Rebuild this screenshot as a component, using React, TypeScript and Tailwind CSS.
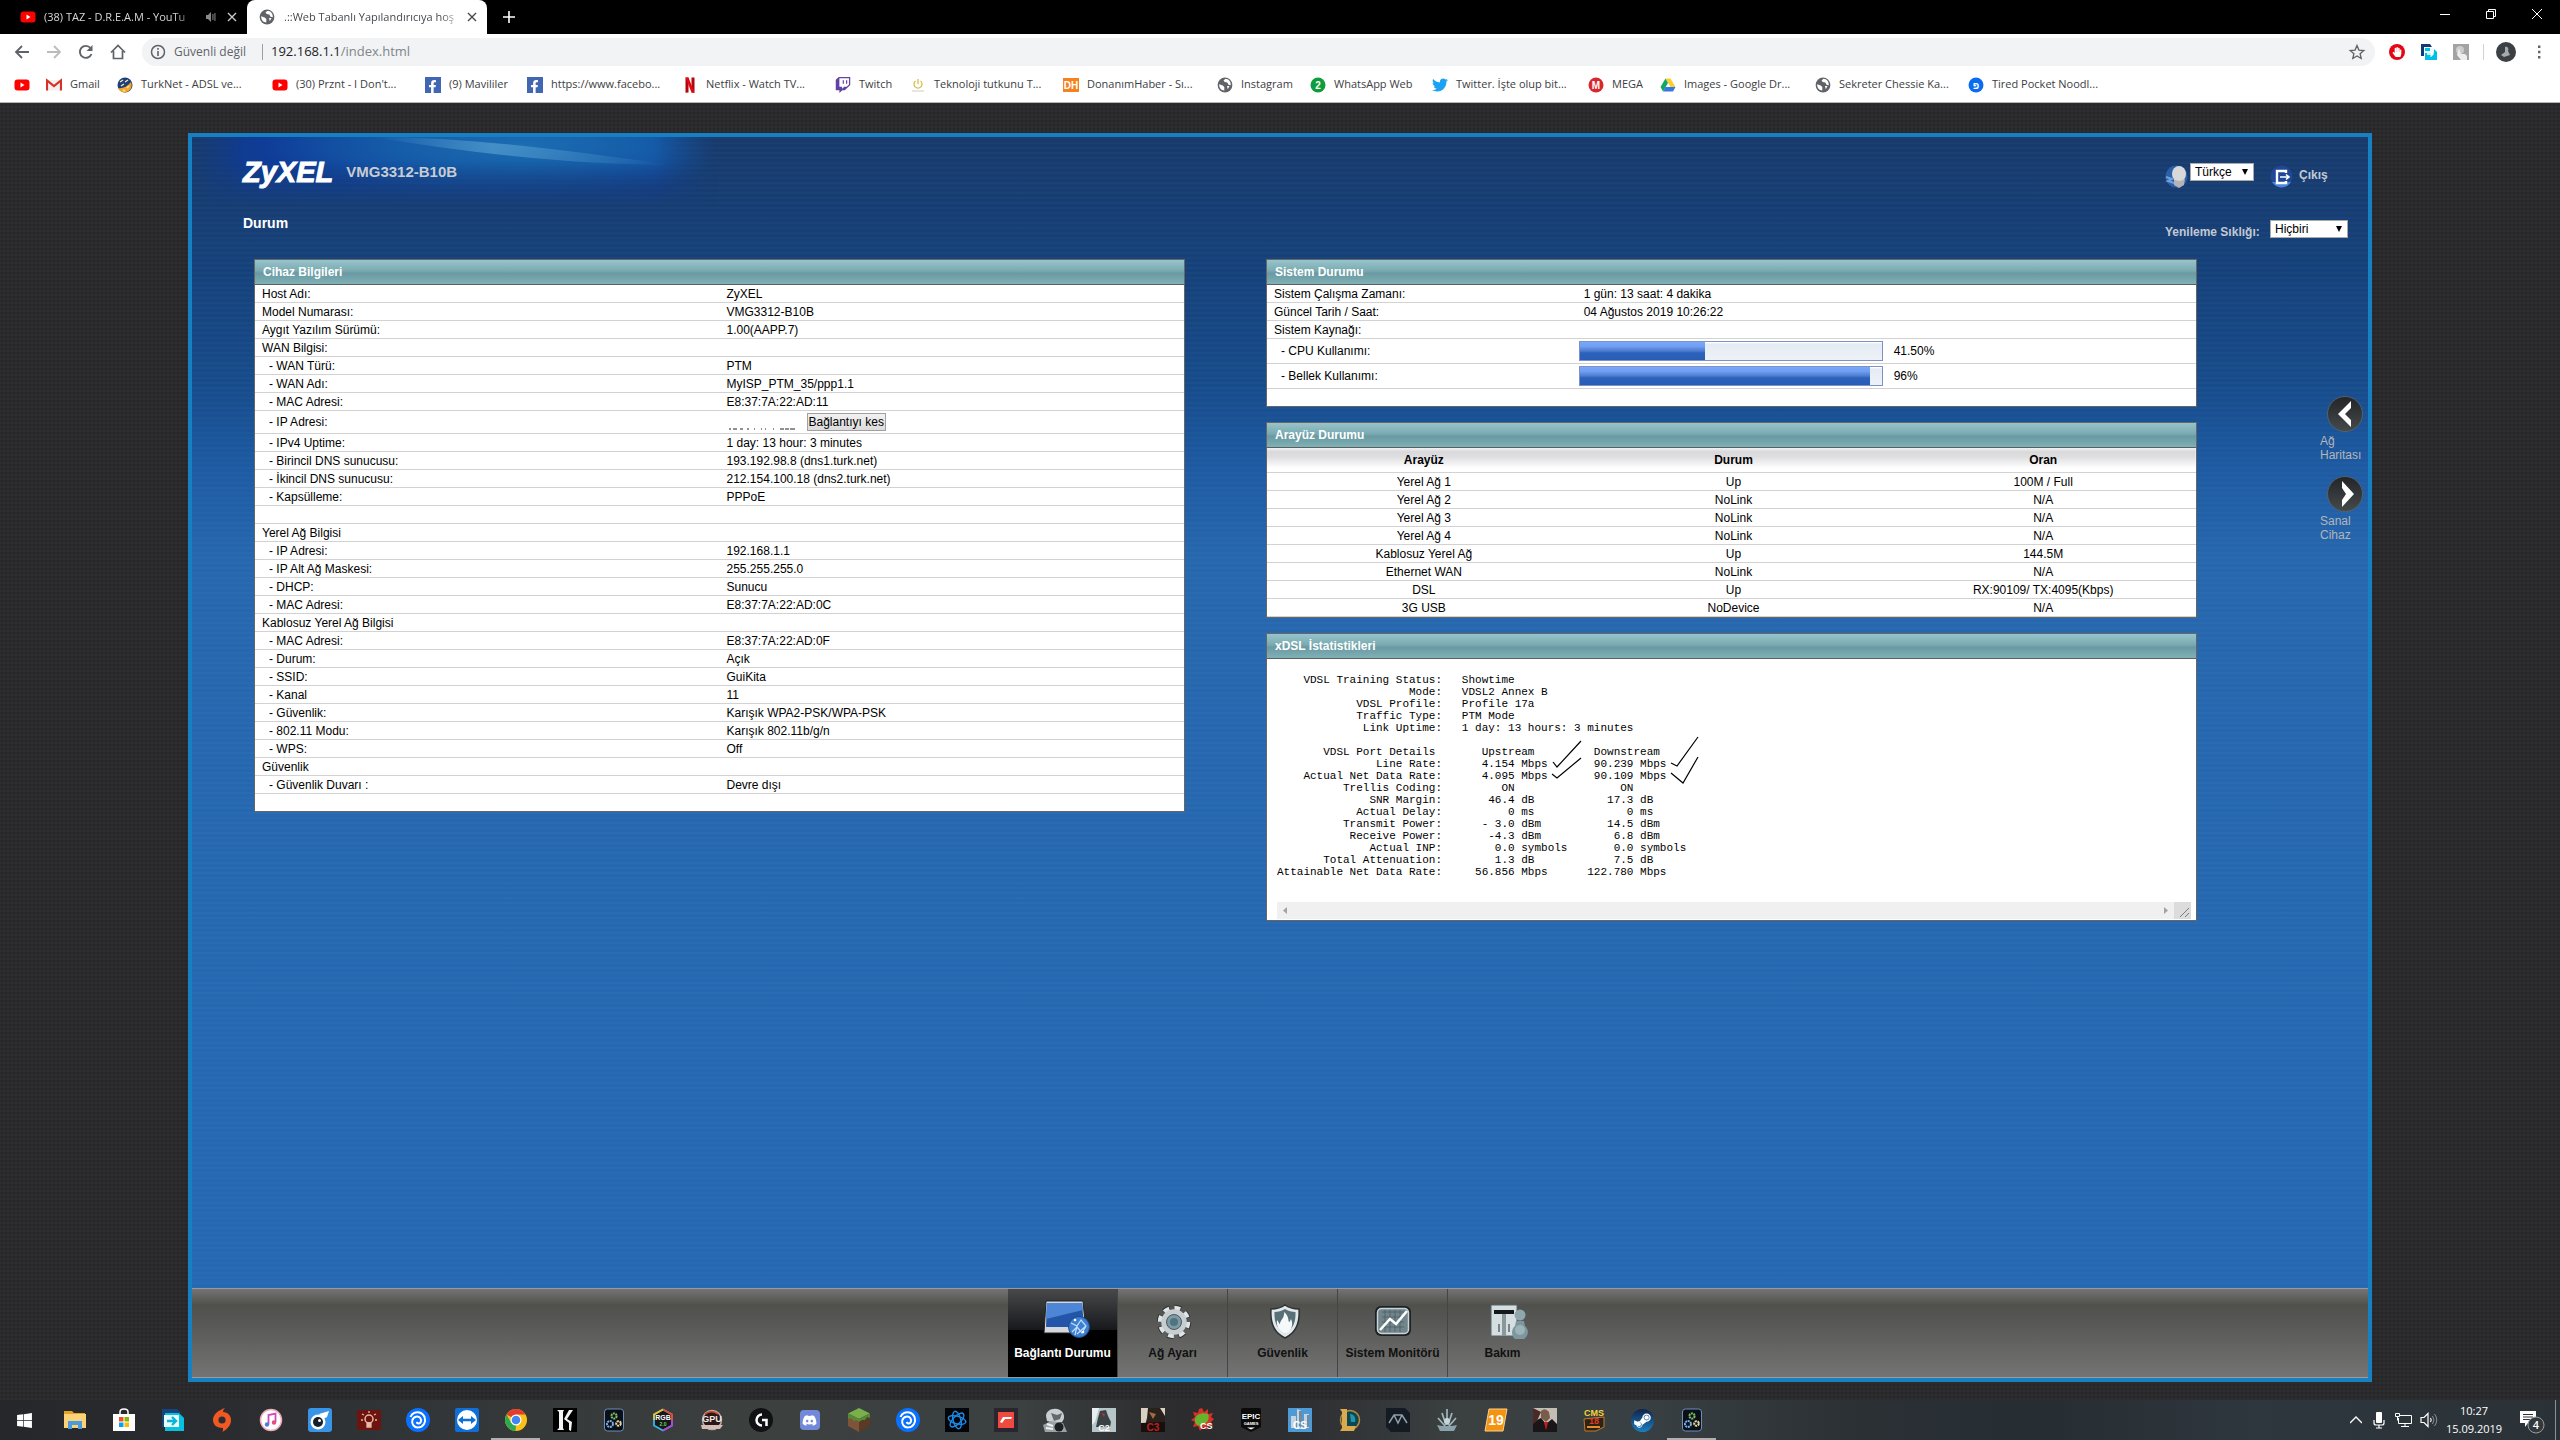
import type { ReactNode } from "react";
import {
  FaDiscord,
  FaFacebookF,
  FaHandPaper,
  FaSteamSymbol,
  FaTwitch,
  FaTwitter,
  FaWindows,
} from "react-icons/fa";

type Bookmark = { label: string; icon: ReactNode; width: string };
type InfoRow = { label: string; value?: string; sub?: boolean };

function YoutubeIcon() {
  return (
    <svg viewBox="0 0 16 16" className="size-4 shrink-0">
      <rect x="0.5" y="2.5" width="15" height="11" rx="3" fill="#f00" />
      <path d="M6.5 5.5v5l4-2.5z" fill="#fff" />
    </svg>
  );
}

function GlobeIcon() {
  return (
    <svg viewBox="0 0 16 16" className="size-4 shrink-0">
      <circle cx="8" cy="8" r="7.4" fill="#5f6368" />
      <path
        d="M2.2 7.2l3.5 1.3 1.6 1.5v3.4c-3 0-5.4-2.6-5.1-6.2zM8.5 1.8l-2 1.7 1.2 1.5 2.6.4 1.2 2.4 2.3.4c.3-3.3-2-6.2-5.3-6.4z"
        fill="#fff"
      />
      <path d="M10 9h2.5l-1.7 3.2z" fill="#fff" />
    </svg>
  );
}

function FacebookIcon() {
  return (
    <span className="flex size-4 shrink-0 items-end justify-end bg-[#4267b2] pr-0.5 text-white">
      <FaFacebookF size={13} />
    </span>
  );
}

function CircleIcon({ color, text }: { color: string; text: string }) {
  return (
    <svg viewBox="0 0 16 16" className="size-4 shrink-0">
      <circle cx="8" cy="8" r="7.5" fill={color} />
      <text x="8" y="11.5" textAnchor="middle" fontFamily="Liberation Sans" fontWeight="bold" fontSize="10" fill="#fff">
        {text}
      </text>
    </svg>
  );
}

const bookmarks: Bookmark[] = [
  { label: "", width: "w-8", icon: <YoutubeIcon /> },
  {
    label: "Gmail",
    width: "w-[71px]",
    icon: (
      <svg viewBox="0 0 16 16" className="size-4 shrink-0">
        <path d="M1 3h14v10.5H1z" fill="#f1f1f1" />
        <path d="M1 13.5V3.5l7 5.5 7-5.5v10" fill="none" stroke="#d93025" strokeWidth="2.2" />
      </svg>
    ),
  },
  {
    label: "TurkNet - ADSL ve...",
    width: "w-[155px]",
    icon: (
      <svg viewBox="0 0 16 16" className="size-4 shrink-0">
        <circle cx="8" cy="8" r="7.5" fill="#1c3f7c" />
        <path d="M1 11c4 1 9-1 13-6 2 5-1 10-6 10.500-3 0-6-2-7-4.500z" fill="#f6a623" />
        <path d="M3 5l3-2M8 5l3-2M4 9l3-2M6 13l2 1M10 11l2-2" stroke="#fbe3b0" strokeWidth="1.5" />
      </svg>
    ),
  },
  { label: "(30) Prznt - I Don't...", width: "w-[153px]", icon: <YoutubeIcon /> },
  { label: "(9) Mavililer", width: "w-[102px]", icon: <FacebookIcon /> },
  { label: "https://www.facebo...", width: "w-[155px]", icon: <FacebookIcon /> },
  {
    label: "Netflix - Watch TV...",
    width: "w-[153px]",
    icon: (
      <svg viewBox="0 0 16 16" className="size-4 shrink-0">
        <path d="M3.5 0.5h3v15l-3 .3zM9.5 0.5h3v15.3l-3-.3z" fill="#b1060f" />
        <path d="M3.5 0.5h3l6 15.3-3-.4z" fill="#e50914" />
      </svg>
    ),
  },
  { label: "Twitch", width: "w-[75px]", icon: <FaTwitch size={16} className="shrink-0 text-[#6441a5]" /> },
  {
    label: "Teknoloji tutkunu T...",
    width: "w-[153px]",
    icon: (
      <svg viewBox="0 0 16 16" className="size-4 shrink-0">
        <path d="M5.5 4a4 4 0 1 0 5 0M8 2v5" fill="none" stroke="#d8c04a" strokeWidth="1.3" />
        <path d="M2 14h12" stroke="#ccc" />
      </svg>
    ),
  },
  {
    label: "DonanımHaber - Sı...",
    width: "w-[154px]",
    icon: (
      <svg viewBox="0 0 16 16" className="size-4 shrink-0">
        <path d="M0 1h16v14H0z" fill="#f58220" />
        <text x="8" y="11.5" textAnchor="middle" fontFamily="Liberation Sans" fontWeight="bold" fontSize="10" fill="#fff">
          DH
        </text>
      </svg>
    ),
  },
  { label: "Instagram", width: "w-[93px]", icon: <GlobeIcon /> },
  { label: "WhatsApp Web", width: "w-[122px]", icon: <CircleIcon color="#0f9d3c" text="2" /> },
  { label: "Twitter. İşte olup bit...", width: "w-[156px]", icon: <FaTwitter size={16} className="shrink-0 text-[#1da1f2]" /> },
  { label: "MEGA", width: "w-[72px]", icon: <CircleIcon color="#d9272e" text="M" /> },
  {
    label: "Images - Google Dr...",
    width: "w-[155px]",
    icon: (
      <svg viewBox="0 0 16 16" className="size-4 shrink-0">
        <path d="M5.5 1.5h5l5 8.5h-5z" fill="#fc3" />
        <path d="M5.5 1.5L.5 10l2.5 4.5L8 6z" fill="#11a861" />
        <path d="M3 14.5L5.5 10h10L13 14.5z" fill="#3777e3" />
      </svg>
    ),
  },
  { label: "Sekreter Chessie Ka...", width: "w-[153px]", icon: <GlobeIcon /> },
  { label: "Tired Pocket Noodl...", width: "w-[150px]", icon: <CircleIcon color="#0b6cf0" text="פ" /> },
];

function CloseIcon() {
  return (
    <svg viewBox="0 0 10 10" className="size-[10px]">
      <path d="M1 1l8 8M9 1L1 9" stroke="currentColor" strokeWidth="1.4" />
    </svg>
  );
}

function TabStrip() {
  return (
    <div className="flex h-[34px] items-center bg-black text-[11px] text-[#c8c8c8]">
      <div className="flex w-[247px] items-center pr-[10px] pl-5">
        <YoutubeIcon />
        <span className="ml-2 w-[154px] whitespace-nowrap text-[#d6d6d6] [mask-image:linear-gradient(to_right,black_85%,transparent)]">
          (38) TAZ - D.R.E.A.M - YouTu
        </span>
        <svg viewBox="0 0 12 12" className="ml-2 size-3 text-[#8a8a8a]">
          <path d="M1 4h2l3-3v10L3 8H1z" fill="currentColor" />
          <path d="M8 3v6M10 2v8" stroke="currentColor" />
        </svg>
        <button className="ml-[10px]" aria-label="Sekmeyi kapat">
          <CloseIcon />
        </button>
      </div>
      <div className="flex h-[34px] w-[240px] items-center rounded-t-lg bg-white pr-[10px] pl-3 text-[#45494d]">
        <GlobeIcon />
        <span className="ml-[9px] w-[178px] whitespace-nowrap [mask-image:linear-gradient(to_right,black_88%,transparent)]">
          .::Web Tabanlı Yapılandırıcıya hoş
        </span>
        <button className="ml-auto" aria-label="Sekmeyi kapat">
          <CloseIcon />
        </button>
      </div>
      <button className="ml-4 text-white" aria-label="Yeni sekme">
        <svg viewBox="0 0 12 12" className="size-3">
          <path d="M6 0v12M0 6h12" stroke="currentColor" strokeWidth="1.6" />
        </svg>
      </button>
      <div className="mb-[6px] ml-auto flex items-center gap-9 pr-[18px] text-white">
        <button aria-label="Küçült">
          <svg viewBox="0 0 10 10" className="size-[10px]">
            <path d="M0 5.5h10" stroke="currentColor" />
          </svg>
        </button>
        <button aria-label="Geri yükle">
          <svg viewBox="0 0 10 10" className="size-[10px]">
            <path d="M.5 2.5h7v7h-7zM2.5 2.5v-2h7v7h-2" fill="none" stroke="currentColor" />
          </svg>
        </button>
        <button aria-label="Kapat">
          <svg viewBox="0 0 10 10" className="size-[10px]">
            <path d="M0 0l10 10M10 0L0 10" stroke="currentColor" />
          </svg>
        </button>
      </div>
    </div>
  );
}

function Toolbar() {
  return (
    <div className="flex h-9 items-center bg-white text-[#5f6368]">
      <div className="flex w-[142px] items-center gap-4 pl-[14px]">
        <button aria-label="Geri">
          <svg viewBox="0 0 16 16" className="size-4">
            <path d="M15 8H2M8 2L2 8l6 6" fill="none" stroke="currentColor" strokeWidth="1.8" />
          </svg>
        </button>
        <button className="text-[#babcbe]" aria-label="İleri">
          <svg viewBox="0 0 16 16" className="size-4">
            <path d="M1 8h13M8 2l6 6-6 6" fill="none" stroke="currentColor" strokeWidth="1.8" />
          </svg>
        </button>
        <button aria-label="Yenile">
          <svg viewBox="0 0 16 16" className="size-4">
            <path d="M13.5 10A6 6 0 1 1 12.5 4" fill="none" stroke="currentColor" strokeWidth="1.9" />
            <path d="M14.5 1v6h-6z" fill="currentColor" />
          </svg>
        </button>
        <button aria-label="Ana sayfa">
          <svg viewBox="0 0 16 16" className="size-4">
            <path d="M1 8.5L8 1.5l7 7M3.5 7v7.5h9V7" fill="none" stroke="currentColor" strokeWidth="1.7" />
          </svg>
        </button>
      </div>
      <div className="flex h-7 flex-1 items-center rounded-full bg-[#f1f3f4] px-2 text-[13px]">
        <svg viewBox="0 0 16 16" className="size-4">
          <circle cx="8" cy="8" r="6.5" fill="none" stroke="currentColor" strokeWidth="1.5" />
          <path d="M8 7v5M8 4v1.7" stroke="currentColor" strokeWidth="1.6" />
        </svg>
        <span className="ml-2 w-20 text-[12px] whitespace-nowrap">Güvenli değil</span>
        <span className="mx-2 h-4 w-px bg-[#9aa0a6]" />
        <span className="text-[#202124]">192.168.1.1</span>
        <span className="flex-1 text-[#80868b]">/index.html</span>
        <button aria-label="Yer işareti ekle">
          <svg viewBox="0 0 20 20" className="size-5">
            <path
              d="M10 3.5l1.9 4.6 4.9.4-3.7 3.2 1.1 4.8-4.2-2.6-4.2 2.6 1.1-4.8-3.7-3.2 4.9-.4z"
              fill="none"
              stroke="currentColor"
              strokeWidth="1.3"
            />
          </svg>
        </button>
      </div>
      <div className="flex items-center pr-[13px] pl-[14px]">
        <button className="flex size-4 items-center justify-center rounded-full bg-[#e30613] text-white" aria-label="AdBlock">
          <FaHandPaper size={10} />
        </button>
        <button className="ml-4" aria-label="Çeviri">
          <svg viewBox="0 0 16 16" className="size-4">
            <path d="M0 0h9l2 3H3v9H0z" fill="#123a7a" />
            <path d="M4 4h8l4 4v8H4z" fill="#00c0e8" />
            <path d="M4 7h5V4h4v5H4z" fill="#e9fbff" />
            <path d="M6 10h6M9.5 7.5L12 10l-2.5 2.5" stroke="#fff" strokeWidth="1.5" fill="none" />
          </svg>
        </button>
        <button className="ml-4" aria-label="Eklenti">
          <svg viewBox="0 0 16 16" className="size-4">
            <path d="M0 0h16v16H0z" fill="#a3a3a3" />
            <circle cx="7" cy="6" r="4" fill="#ccc" />
            <path d="M6 4l2 6h4l2 2v4H8L4 11z" fill="#eee" />
          </svg>
        </button>
        <span className="mr-3 ml-[14px] h-4 w-px bg-[#d0d3d6]" />
        <button aria-label="Profil">
          <svg viewBox="0 0 20 20" className="size-5">
            <circle cx="10" cy="10" r="10" fill="#3b4045" />
            <path d="M9 5c3-1 4 2 3 4l2 4-6 2-3-2 4-3z" fill="#a7a9ab" />
          </svg>
        </button>
        <button className="ml-[15px]" aria-label="Menü">
          <svg viewBox="0 0 16 16" className="size-4">
            <path d="M7 1.500h2.400v2.400H7zM7 6.800h2.400v2.400H7zM7 12.100h2.400v2.400H7z" fill="currentColor" />
          </svg>
        </button>
      </div>
    </div>
  );
}

function BookmarkBar() {
  return (
    <nav className="flex h-[33px] items-center border-b border-[#b6b6b6] bg-white pb-[3px] pl-[14px] text-[11px] text-[#3c4043]">
      {bookmarks.map((b, i) => (
        <a key={i} href="#" aria-label={b.label || "YouTube"} className={`flex shrink-0 items-center gap-2 whitespace-nowrap ${b.width}`}>
          {b.icon}
          {b.label}
        </a>
      ))}
    </nav>
  );
}

function Dropdown({ id, value, width }: { id: string; value: string; width: string }) {
  return (
    <span className={`relative ${width}`}>
      <select
        id={id}
        aria-label={value}
        className="h-[18px] w-full appearance-none border border-[#a9a9a9] bg-white px-1 text-[12px] leading-[16px] text-black"
      >
        <option>{value}</option>
      </select>
      <svg viewBox="0 0 8 8" className="pointer-events-none absolute top-[5px] right-[5px] size-2">
        <path d="M1 1h6L4 7z" fill="#000" />
      </svg>
    </span>
  );
}

function Header() {
  return (
    <header className="relative flex h-[122px] justify-between pr-5 pl-[51px]">
      {/* glow behind the logo, faded out to the sides and the bottom */}
      <div className="absolute top-0 left-0 h-[70px] w-[525px] bg-[radial-gradient(ellipse_260px_50px_at_330px_8px,#1c6db2_0%,#155ca8_50%,transparent_100%),linear-gradient(to_right,#123b86,#0f3c98_15%,#1146a0_50%,#123f98_88%,#15407c)] [mask-composite:intersect] [mask-image:linear-gradient(to_bottom,black_35%,transparent),linear-gradient(to_right,transparent,black_10%,black_88%,transparent)]" />
      <svg viewBox="0 0 530 60" className="absolute top-0 left-0 h-[60px] w-[530px]">
        <defs>
          <linearGradient id="streak" x1="0" y1="0" x2="1" y2="0">
            <stop offset="0" stopColor="#6db4de" stopOpacity="0" />
            <stop offset="0.4" stopColor="#6db4de" stopOpacity="0.5" />
            <stop offset="1" stopColor="#6db4de" stopOpacity="0" />
          </linearGradient>
        </defs>
        <path d="M180 0c100 0 200 14 300 28-90 0-190-10-300-28z" fill="url(#streak)" />
      </svg>
      <div className="relative flex flex-col">
        <div className="flex h-[71px] items-center gap-[13px]">
          <span className="text-[29px] leading-[35px] font-bold text-white italic [-webkit-text-stroke:1px_white]">ZyXEL</span>
          <span className="text-[15px] font-bold text-[#c8ccd2]">VMG3312-B10B</span>
        </div>
        <h1 className="mt-[7px] text-[14px] leading-4 font-bold text-white">Durum</h1>
      </div>
      <div className="relative flex w-[183px] flex-col pt-[26px] text-[12px] font-bold text-[#c3c9d3]">
        <div className="flex items-start">
          <svg viewBox="0 0 23 23" className="mt-0.5 size-[23px]">
            <circle cx="11.5" cy="11.5" r="11" fill="#2b5fa8" />
            <ellipse cx="14" cy="9" rx="7" ry="8" fill="#d9d9d9" />
            <path d="M9 15l6 1 5-2-1 6-5 3-5-3z" fill="#b4b4b4" />
            <path d="M1 12l6 2-4 2 6 2" fill="none" stroke="#6fa0dc" strokeWidth="2" />
          </svg>
          <Dropdown id="language" value="Türkçe" width="ml-0.5 w-16 font-normal" />
          <svg viewBox="0 0 23 23" className="mt-0.5 ml-4 size-[23px]">
            <circle cx="11.5" cy="11.5" r="11" fill="#1f4796" />
            <path d="M2 17a11 11 0 0 0 19 0z" fill="#4d84dc" />
            <path d="M16 8V6H7v12h9v-2" fill="none" stroke="#fff" strokeWidth="2.4" />
            <path d="M10 12h9M16 9.5l3 2.5-3 2.5" fill="none" stroke="#fff" strokeWidth="1.6" />
          </svg>
          <a href="#" className="mt-1 ml-[6px] leading-[16px]">
            Çıkış
          </a>
        </div>
        <div className="mt-8 flex items-start justify-between">
          <label htmlFor="refresh" className="mt-1 leading-[16px]">
            Yenileme Sıklığı:
          </label>
          <Dropdown id="refresh" value="Hiçbiri" width="w-[78px] font-normal" />
        </div>
      </div>
    </header>
  );
}

function Panel({ title, children }: { title: string; children: ReactNode }) {
  return (
    <section className="border border-[#666] bg-white">
      <h2 className="h-[25px] border-b border-[#5a5f60] bg-[linear-gradient(#98c4cb_0%,#7aaab1_45%,#6999a2_55%,#80b1b6_100%)] pl-2 text-[12px] leading-[24px] font-bold text-white">
        {title}
      </h2>
      {children}
    </section>
  );
}

const wanRows: InfoRow[] = [
  { label: "Host Adı:", value: "ZyXEL" },
  { label: "Model Numarası:", value: "VMG3312-B10B" },
  { label: "Aygıt Yazılım Sürümü:", value: "1.00(AAPP.7)" },
  { label: "WAN Bilgisi:" },
  { label: "WAN Türü:", value: "PTM", sub: true },
  { label: "WAN Adı:", value: "MyISP_PTM_35/ppp1.1", sub: true },
  { label: "MAC Adresi:", value: "E8:37:7A:22:AD:11", sub: true },
];

const lanRows: InfoRow[] = [
  { label: "IPv4 Uptime:", value: "1 day: 13 hour: 3 minutes", sub: true },
  { label: "Birincil DNS sunucusu:", value: "193.192.98.8 (dns1.turk.net)", sub: true },
  { label: "İkincil DNS sunucusu:", value: "212.154.100.18 (dns2.turk.net)", sub: true },
  { label: "Kapsülleme:", value: "PPPoE", sub: true },
  { label: "" },
  { label: "Yerel Ağ Bilgisi" },
  { label: "IP Adresi:", value: "192.168.1.1", sub: true },
  { label: "IP Alt Ağ Maskesi:", value: "255.255.255.0", sub: true },
  { label: "DHCP:", value: "Sunucu", sub: true },
  { label: "MAC Adresi:", value: "E8:37:7A:22:AD:0C", sub: true },
  { label: "Kablosuz Yerel Ağ Bilgisi" },
  { label: "MAC Adresi:", value: "E8:37:7A:22:AD:0F", sub: true },
  { label: "Durum:", value: "Açık", sub: true },
  { label: "SSID:", value: "GuiKita", sub: true },
  { label: "Kanal", value: "11", sub: true },
  { label: "Güvenlik:", value: "Karışık WPA2-PSK/WPA-PSK", sub: true },
  { label: "802.11 Modu:", value: "Karışık 802.11b/g/n", sub: true },
  { label: "WPS:", value: "Off", sub: true },
  { label: "Güvenlik" },
  { label: "Güvenlik Duvarı :", value: "Devre dışı", sub: true },
];

function InfoCells({ label, value, sub }: InfoRow) {
  return (
    <tr>
      <td className={`h-[18px] border-b border-[#d2d2d2] ${sub ? "pl-[14px]" : "pl-[7px]"}`}>
        {sub ? `- ${label}` : label}
      </td>
      <td className="border-b border-[#d2d2d2] pl-[7px]">{value}</td>
    </tr>
  );
}

function DeviceInfo() {
  return (
    <Panel title="Cihaz Bilgileri">
      <table className="w-full table-fixed border-separate border-spacing-0 text-[12px] leading-[16px]">
        <tbody>
          {wanRows.map((r, i) => (
            <InfoCells key={i} {...r} />
          ))}
          <tr>
            <td className="h-[23px] border-b border-[#d2d2d2] pl-[14px]">- IP Adresi:</td>
            <td className="border-b border-[#d2d2d2] pl-[7px]">
              <div className="flex items-end gap-[10px]">
                <svg viewBox="0 0 70 4" className="h-1 w-[70px]">
                  <path d="M2 2h2m2 0h4m3 0h3m4 0h2m5 0h1m6 0h1m3 0h1m7 0h1m6 0h4m1 0h4m1 0h5" stroke="#222" />
                </svg>
                <button className="h-[18px] border border-[#a0a0a0] bg-[linear-gradient(#f2f2f2,#dcdcdc)] px-px leading-[16px] whitespace-nowrap">
                  Bağlantıyı kes
                </button>
              </div>
            </td>
          </tr>
          {lanRows.map((r, i) => (
            <InfoCells key={i} {...r} />
          ))}
          <tr>
            <td colSpan={2} className="h-[17px]" />
          </tr>
        </tbody>
      </table>
    </Panel>
  );
}

const usage = [
  { label: "CPU Kullanımı:", text: "41.50%", percent: 41.5 },
  { label: "Bellek Kullanımı:", text: "96%", percent: 96 },
];

function SystemStatus() {
  return (
    <Panel title="Sistem Durumu">
      <table className="w-full table-fixed border-separate border-spacing-0 text-[12px] leading-[16px]">
        <colgroup>
          <col className="w-1/3" />
          <col className="w-2/3" />
        </colgroup>
        <tbody>
          <InfoCells label="Sistem Çalışma Zamanı:" value="1 gün: 13 saat: 4 dakika" />
          <InfoCells label="Güncel Tarih / Saat:" value="04 Ağustos 2019 10:26:22" />
          <InfoCells label="Sistem Kaynağı:" />
          {usage.map((u) => (
            <tr key={u.label}>
              <td className="h-[25px] border-b border-[#d2d2d2] pl-[14px]">- {u.label}</td>
              <td className="border-b border-[#d2d2d2] pl-0.5">
                <div className="flex items-center gap-[11px]">
                  <div className="h-5 w-[304px] border border-[#7d93c8] bg-[linear-gradient(#ffffff_5%,#e4ebf3_10%,#eef2f8)]">
                    <div
                      className="h-full bg-[linear-gradient(#7aa8fb_0%,#6f9ef2_25%,#4d7ccc_50%,#2a63bd_60%,#2a5cb5_100%)]"
                      style={{ width: `${u.percent}%` }}
                    />
                  </div>
                  {u.text}
                </div>
              </td>
            </tr>
          ))}
          <tr>
            <td colSpan={2} className="h-[17px]" />
          </tr>
        </tbody>
      </table>
    </Panel>
  );
}

const interfaces = [
  ["Yerel Ağ 1", "Up", "100M / Full"],
  ["Yerel Ağ 2", "NoLink", "N/A"],
  ["Yerel Ağ 3", "NoLink", "N/A"],
  ["Yerel Ağ 4", "NoLink", "N/A"],
  ["Kablosuz Yerel Ağ", "Up", "144.5M"],
  ["Ethernet WAN", "NoLink", "N/A"],
  ["DSL", "Up", "RX:90109/ TX:4095(Kbps)"],
  ["3G USB", "NoDevice", "N/A"],
];

function InterfaceStatus() {
  return (
    <Panel title="Arayüz Durumu">
      <table className="w-full table-fixed border-separate border-spacing-0 text-center text-[12px] leading-[16px]">
        <thead className="bg-[linear-gradient(#f2f2f2_0%,#d9d9dc_15%,#dedee0_35%,#ffffff_80%)]">
          <tr>
            {["Arayüz", "Durum", "Oran"].map((h) => (
              <th key={h} className="h-[25px] border-b border-[#d2d2d2] pl-1 font-bold">
                {h}
              </th>
            ))}
          </tr>
        </thead>
        <tbody>
          {interfaces.map((row) => (
            <tr key={row[0]}>
              {row.map((cell, i) => (
                <td key={i} className="h-[18px] border-b border-[#d2d2d2] pl-1">
                  {cell}
                </td>
              ))}
            </tr>
          ))}
        </tbody>
      </table>
    </Panel>
  );
}

const stats = [
  "    VDSL Training Status:   Showtime",
  "                    Mode:   VDSL2 Annex B",
  "            VDSL Profile:   Profile 17a",
  "            Traffic Type:   PTM Mode",
  "             Link Uptime:   1 day: 13 hours: 3 minutes",
  "",
  "       VDSL Port Details       Upstream         Downstream",
  "               Line Rate:      4.154 Mbps       90.239 Mbps",
  "    Actual Net Data Rate:      4.095 Mbps       90.109 Mbps",
  "          Trellis Coding:         ON                ON",
  "              SNR Margin:       46.4 dB           17.3 dB",
  "            Actual Delay:          0 ms              0 ms",
  "          Transmit Power:      - 3.0 dBm          14.5 dBm",
  "           Receive Power:       -4.3 dBm           6.8 dBm",
  "              Actual INP:        0.0 symbols       0.0 symbols",
  "       Total Attenuation:        1.3 dB            7.5 dB",
  "Attainable Net Data Rate:     56.856 Mbps      122.780 Mbps",
].join("\n");

function DslStats() {
  return (
    <Panel title="xDSL İstatistikleri">
      <div className="relative pt-[15px] pr-[5px] pb-px pl-[10px]">
        <textarea
          readOnly
          rows={17}
          wrap="off"
          aria-label="xDSL İstatistikleri"
          defaultValue={stats}
          className="mb-6 block w-full resize-none overflow-hidden font-['Liberation_Mono',monospace] text-[11px] leading-3 text-black outline-none"
        />
        {/* pen ticks next to the line rates */}
        <svg viewBox="0 0 150 50" className="pointer-events-none absolute top-[76px] left-[283px] h-[50px] w-[150px]">
          <path
            d="M3 27l4 5 24-26M2 39l5 4 24-20M121 28l6 3 21-29M121 38l12 10 15-26"
            fill="none"
            stroke="#000"
            strokeWidth="1.2"
          />
        </svg>
        <div className="flex h-[17px] justify-between bg-[#f0f0f0]">
          <svg viewBox="0 0 17 17" className="size-[17px]">
            <path d="M10 5v7L6 8.5z" fill="#a3a3a3" />
          </svg>
          <div className="flex">
            <svg viewBox="0 0 17 17" className="size-[17px]">
              <path d="M7 5v7l4-3.500z" fill="#a3a3a3" />
            </svg>
            <svg viewBox="0 0 17 17" className="size-[17px] bg-[#dcdcdc]">
              <path d="M6 15l9-9M11 15l4-4" stroke="#7d7d7d" />
            </svg>
          </div>
        </div>
      </div>
    </Panel>
  );
}

function SideLink({ label, path }: { label: string; path: string }) {
  return (
    <a href="#" className="flex w-[43px] flex-col gap-0.5 text-[12px] leading-[14px] text-[#b5b5b8]">
      <svg viewBox="0 0 36 36" className="size-9 self-end">
        <defs>
          <linearGradient id="knob" x1="0" y1="0" x2="0" y2="1">
            <stop offset="0" stopColor="#232528" />
            <stop offset="1" stopColor="#454a4b" />
          </linearGradient>
        </defs>
        <circle cx="18" cy="18" r="17.5" fill="url(#knob)" stroke="#56606a" />
        <path d={path} fill="#fff" />
      </svg>
      {label}
    </a>
  );
}

const navItems = [
  {
    label: "Bağlantı Durumu",
    icon: (
      <svg viewBox="0 0 48 40" className="ml-2 h-10 w-12">
        <path d="M3 1h37l3 32H1z" fill="#d5d8dc" stroke="#222" />
        <path d="M4 3h35l2 24H3z" fill="#2356a8" />
        <path d="M4 3h35l1 7L3 19z" fill="#4d86d6" />
        <circle cx="36" cy="27" r="10.5" fill="#3f7fd0" stroke="#1b4b8e" />
        <path d="M28 23l6 3 4-6 5 6-4 7-5-6-5 5M34 26l-2 9M43 26l-9 8" fill="none" stroke="#bfe0ff" strokeWidth="1.2" />
        <circle cx="32" cy="20" r="1.3" fill="#fff" />
        <circle cx="40" cy="32" r="1.3" fill="#fff" />
      </svg>
    ),
  },
  {
    label: "Ağ Ayarı",
    icon: (
      <svg viewBox="0 0 36 40" className="ml-0.5 h-10 w-9">
        <circle cx="18" cy="22" r="14.5" fill="none" stroke="#2d3335" strokeWidth="5.5" strokeDasharray="6.600 4.790" />
        <circle cx="18" cy="22" r="14" fill="none" stroke="#dfe4e6" strokeWidth="4.5" strokeDasharray="5.800 5.200" />
        <circle cx="18" cy="22" r="10" fill="none" stroke="#c8ced0" strokeWidth="5.5" />
        <circle cx="18" cy="22" r="7.5" fill="#7e9ba5" stroke="#4a5a60" />
        <circle cx="18" cy="22" r="4" fill="#4f7480" />
      </svg>
    ),
  },
  {
    label: "Güvenlik",
    icon: (
      <svg viewBox="0 0 36 40" className="ml-1 h-10 w-9">
        <path d="M18 5c4 3 9 4 14 4 1 13-3 24-14 29C7 33 3 22 4 9c5 0 10-1 14-4z" fill="#e3e9ea" stroke="#2b3133" strokeWidth="1.5" />
        <path d="M18 9c3 2 7 3 10.500 3 .5 10-2.500 17-10.500 22C10 29 7 22 7.500 12 11 12 15 11 18 9z" fill="#587078" />
        <path d="M18 34c-6-3-9-8-8-14 2 2 2 4 3 4 0-4 5-6 4-12 5 4 4 8 5 10 1 0 1-2 2-3 3 6 0 13-6 15z" fill="#f6f9f9" />
      </svg>
    ),
  },
  {
    label: "Sistem Monitörü",
    icon: (
      <svg viewBox="0 0 40 40" className="h-10 w-10">
        <rect x="2" y="6" width="36" height="30" rx="6" fill="#1c2124" />
        <rect x="4.5" y="8.5" width="31" height="25" rx="4" fill="#71858b" stroke="#c9d4d6" strokeWidth="1.5" />
        <path d="M9 12h22M9 17h22M9 22h22M9 27h22M12 10v22M17 10v22M22 10v22M27 10v22" stroke="#4b5d63" strokeWidth="0.8" />
        <path d="M7 30l10-11 6 5 11-13" fill="none" stroke="#fff" strokeWidth="2.6" />
      </svg>
    ),
  },
  {
    label: "Bakım",
    icon: (
      <svg viewBox="0 0 40 40" className="ml-3 h-10 w-10">
        <path d="M2 5h26v31H2z" fill="#d5dee0" stroke="#59656a" />
        <path d="M5 10h20v4H5z" fill="#15191b" />
        <path d="M13 14h4v22h-4z" fill="#8a989c" />
        <path d="M20 24v8M10 24v8" stroke="#5b686d" strokeWidth="1.5" />
        <circle cx="31" cy="15" r="5.5" fill="#8fa6ad" />
        <path d="M27 21h8l1 5c4 3 4 10-1 13h-9c-4-3-4-10 0-13z" fill="#7d979f" />
        <circle cx="31" cy="30" r="5" fill="#9db3b9" />
      </svg>
    ),
  },
];

function BottomNav() {
  return (
    <nav className="flex h-[90px] justify-center border-y border-[#9a9a9a] bg-[linear-gradient(#747474_0%,#50504c_18%,#565654_35%,#747474_100%)] pl-[6px] text-[12px] font-bold">
      {navItems.map((item, i) => (
        <a
          key={item.label}
          href="#"
          className={`flex w-[110px] flex-col items-center border-r pt-[11px] ${
            i === 0
              ? "bg-[linear-gradient(#47494a_0%,#18191d_46%,#000000_47%)] text-white"
              : "text-[#111]"
          } ${i === navItems.length - 1 ? "border-transparent" : "border-[#454545]"}`}
        >
          {item.icon}
          <span className="mt-1 whitespace-nowrap">{item.label}</span>
        </a>
      ))}
    </nav>
  );
}

function AppSvg({ children }: { children: ReactNode }) {
  return (
    <svg viewBox="0 0 24 24" className="size-6">
      {children}
    </svg>
  );
}

function SvgText({ y, size, fill, children }: { y: number; size: number; fill: string; children: string }) {
  return (
    <text x="12" y={y} textAnchor="middle" fontFamily="Liberation Sans" fontWeight="bold" fontSize={size} fill={fill}>
      {children}
    </text>
  );
}

function Ubisoft() {
  return (
    <AppSvg>
      <circle cx="12" cy="12" r="12" fill="#0a70ff" />
      <path
        d="M4.5 9C6 5 10 3.5 13.5 4.5c5 1.5 7 7 4.5 11.5-2.5 4-8 4.5-10.5 1.5-2.5-3-1.5-8 2.5-8.8 3.5-.7 6 2.3 4.8 5.3-1 2.2-3.8 2-4-.2"
        fill="none"
        stroke="#fff"
        strokeWidth="2"
      />
    </AppSvg>
  );
}

function Gears() {
  return (
    <AppSvg>
      <rect x="2.5" y="1" width="19" height="22" rx="3" fill="#0c1016" stroke="#6b8fc0" />
      <circle cx="12" cy="8" r="2.6" fill="none" stroke="#7fc06a" strokeWidth="2" strokeDasharray="2 0.7" />
      <circle cx="8" cy="16" r="3" fill="none" stroke="#7ab0ea" strokeWidth="2" strokeDasharray="2 0.7" />
      <circle cx="16.5" cy="15.5" r="2.3" fill="none" stroke="#ead9a0" strokeWidth="2" strokeDasharray="2 0.7" />
    </AppSvg>
  );
}

const apps: { name: string; icon: ReactNode; open?: boolean }[] = [
  {
    name: "Dosya Gezgini",
    icon: (
      <AppSvg>
        <path d="M1 3h8l2 2h11v5H1z" fill="#e3a325" />
        <path d="M1 6h22v14H1z" fill="#fbd277" />
        <path d="M5 21v-8h14v8h-4v-4H9v4z" fill="#4a9be0" />
      </AppSvg>
    ),
  },
  {
    name: "Store",
    icon: (
      <AppSvg>
        <path d="M8 7V4q0-3 4-3t4 3v3" fill="none" stroke="#fff" strokeWidth="1.5" />
        <path d="M1 6h22v17H1z" fill="#fff" />
        <path d="M7 9h4.5v4.5H7z" fill="#f25022" />
        <path d="M12.5 9H17v4.5h-4.5z" fill="#7fba00" />
        <path d="M7 14.5h4.5V19H7z" fill="#00a4ef" />
        <path d="M12.5 14.5H17V19h-4.5z" fill="#ffb900" />
      </AppSvg>
    ),
  },
  {
    name: "Aktarım",
    icon: (
      <AppSvg>
        <path d="M1 1h15l4 4H5v14H1z" fill="#14467d" />
        <path d="M4 5h14l5 5v13H4z" fill="#08c0df" />
        <path d="M3 7h15v12H3z" fill="#e8fbff" />
        <path d="M6 13h9M11 9l4 4-4 4" fill="none" stroke="#08b5d6" strokeWidth="2.4" />
      </AppSvg>
    ),
  },
  {
    name: "Origin",
    icon: (
      <AppSvg>
        <path d="M15 0c-1 1-2 2-2 4 5 0 8 4 8 8 0 6-5 10-9 12 1-1 1-2 1-4-6 0-10-3-10-8 0-6 6-10 12-12z" fill="#f05a22" />
        <circle cx="12" cy="12" r="3.6" fill="#2b2d30" />
      </AppSvg>
    ),
  },
  {
    name: "iTunes",
    icon: (
      <AppSvg>
        <circle cx="12" cy="12" r="10.5" fill="#fff" stroke="#f0a9b8" strokeWidth="1.5" />
        <path d="M9.5 16V7l7-1.5V14" fill="none" stroke="#d048c0" strokeWidth="1.8" />
        <circle cx="8" cy="16.5" r="2.2" fill="#4a7de0" />
        <circle cx="15" cy="14.5" r="2.2" fill="#e0507d" />
      </AppSvg>
    ),
  },
  {
    name: "Kamera",
    icon: (
      <AppSvg>
        <rect width="24" height="24" rx="3" fill="#3794e6" />
        <circle cx="10" cy="14" r="7.5" fill="#fff" />
        <circle cx="10" cy="14" r="5" fill="#15202b" />
        <circle cx="11.5" cy="12.5" r="1.5" fill="#fff" />
        <path d="M11 6l10-3-2 6-4 2z" fill="#fff" />
      </AppSvg>
    ),
  },
  {
    name: "Ampul",
    icon: (
      <AppSvg>
        <path d="M0 2h24v20H0z" fill="#6e1410" />
        <circle cx="12" cy="11" r="4" fill="none" stroke="#e9b9a4" strokeWidth="1.5" />
        <path d="M10 15h4v4h-4zM12 3v2M5 6l2 1M19 6l-2 1M4 12h2M18 12h2" stroke="#e9b9a4" strokeWidth="1.3" fill="#e9b9a4" />
      </AppSvg>
    ),
  },
  { name: "Uplay", icon: <Ubisoft /> },
  {
    name: "TeamViewer",
    icon: (
      <AppSvg>
        <rect width="24" height="24" rx="2" fill="#0e6fd8" />
        <circle cx="12" cy="12" r="10" fill="#fff" />
        <path d="M3 12l5-4v2.7h8V8l5 4-5 4v-2.7H8V16z" fill="#0e6fd8" />
      </AppSvg>
    ),
  },
  {
    name: "Chrome",
    open: true,
    icon: (
      <AppSvg>
        <circle cx="12" cy="12" r="11" fill="#fbc116" />
        <path d="M12 12L2.500 6.500A11 11 0 0 1 21.500 6.500H12z" fill="#e33b2e" />
        <path d="M2.5 6.5L7.2 14.8 12 17l-.5 6A11 11 0 0 1 2.5 6.5z" fill="#2da94f" />
        <circle cx="12" cy="12" r="5.5" fill="#fff" />
        <circle cx="12" cy="12" r="4.3" fill="#4285f4" />
      </AppSvg>
    ),
  },
  {
    name: "Knight",
    icon: (
      <AppSvg>
        <path d="M0 0h24v24H0z" fill="#000" />
        <path d="M4 2h7l-1 2v16l1 2H4l2-2V4zM11 11l5-9h4l-6 9 5 3-1 9-2-1v-7z" fill="#f4f4f4" />
      </AppSvg>
    ),
  },
  { name: "Araçlar", icon: <Gears /> },
  {
    name: "RGB Fusion",
    icon: (
      <AppSvg>
        <path d="M12 1.5l9 5v11l-9 5-9-5v-11z" fill="#17181a" stroke="#39b6e8" strokeWidth="1.8" />
        <path d="M12 1.5l9 5v5.5" fill="none" stroke="#e14a36" strokeWidth="1.8" />
        <path d="M21 12v5.5l-9 5" fill="none" stroke="#b147d4" strokeWidth="1.8" />
        <path d="M3 12V6.5l9-5" fill="none" stroke="#f0c12f" strokeWidth="1.8" />
        <SvgText y={12} size={7} fill="#fff">RGB</SvgText>
        <SvgText y={18} size={5} fill="#6bd24c">2.0</SvgText>
      </AppSvg>
    ),
  },
  {
    name: "Tuning",
    icon: (
      <AppSvg>
        <circle cx="12" cy="12" r="9.5" fill="#2a1717" stroke="#bdaea9" strokeWidth="1.5" />
        <SvgText y={14} size={9} fill="#f1e8e5">GPU</SvgText>
        <path d="M1 17h22l-3 4H2z" fill="#d8bdb6" />
        <path d="M5 6c4-3 9-3 13 0" stroke="#d4462f" strokeWidth="1.6" fill="none" />
      </AppSvg>
    ),
  },
  {
    name: "Logitech G",
    icon: (
      <AppSvg>
        <circle cx="12" cy="12" r="12" fill="#111214" />
        <path d="M13 6.5a5.5 5.5 0 1 0 0 11M13 12h4.5v6" fill="none" stroke="#fff" strokeWidth="2.5" />
      </AppSvg>
    ),
  },
  {
    name: "Discord",
    icon: (
      <span className="flex size-5 items-center justify-center rounded-sm bg-[#7289da] text-white">
        <FaDiscord size={15} />
      </span>
    ),
  },
  {
    name: "Minecraft",
    icon: (
      <AppSvg>
        <path d="M12 0l11 5.5L12 11 1 5.5z" fill="#78b04c" />
        <path d="M1 5.5L12 11v13L1 18z" fill="#7d5438" />
        <path d="M23 5.5L12 11v13l11-6z" fill="#5a3a26" />
        <path d="M1 5.5L12 11v3l-3-2-2 1-3-3-3 1zM23 5.5L12 11v3l3-2h3l2-3 3 1z" fill="#568a35" />
      </AppSvg>
    ),
  },
  { name: "Ubisoft Connect", icon: <Ubisoft /> },
  {
    name: "Battle.net",
    icon: (
      <AppSvg>
        <path d="M0 0h24v24H0z" fill="#030509" />
        <g fill="none" stroke="#1a8be8" strokeWidth="1.4">
          <ellipse cx="12" cy="12" rx="9" ry="3.8" transform="rotate(15 12 12)" />
          <ellipse cx="12" cy="12" rx="9" ry="3.8" transform="rotate(75 12 12)" />
          <ellipse cx="12" cy="12" rx="9" ry="3.8" transform="rotate(135 12 12)" />
        </g>
      </AppSvg>
    ),
  },
  {
    name: "Forza",
    icon: (
      <AppSvg>
        <path d="M0 0h24v24H0z" fill="#2b2530" />
        <path d="M4 4h16v16H4z" fill="#ee4a3f" />
        <path d="M6 14l3-5h9l-1 2h-6l-3 4z" fill="#fff" />
      </AppSvg>
    ),
  },
  {
    name: "Crysis",
    icon: (
      <AppSvg>
        <path d="M3 8c0-6 8-9 14-6 5 3 5 9 2 12l-7 1-8-2z" fill="#c9cfd1" />
        <path d="M8 5l6 2 5-2-2 6-6 2z" fill="#64696b" />
        <path d="M0 17l8-4 12 2 4 9H2z" fill="#9ba2a5" />
        <circle cx="16" cy="19" r="4.5" fill="#1d2022" />
        <path d="M4 16l6 2M3 20l7 1" stroke="#eef1f2" strokeWidth="2" />
      </AppSvg>
    ),
  },
  {
    name: "Crysis 2",
    icon: (
      <AppSvg>
        <path d="M0 0h24v24H0z" fill="#b6c5c8" />
        <path d="M8 3l6-1 2 6 3 6-1 5H4l2-9z" fill="#3a4144" />
        <path d="M9 5l4 1-1 3z" fill="#b6352d" />
        <path d="M0 0h7l-4 14-3 3z" fill="#e6eeef" />
        <SvgText y={23} size={9} fill="#fff">C2</SvgText>
      </AppSvg>
    ),
  },
  {
    name: "Crysis 3",
    icon: (
      <AppSvg>
        <path d="M0 0h24v24H0z" fill="#d9cfc2" />
        <path d="M7 0h12l5 8v10H4l2-8z" fill="#2a211c" />
        <path d="M8 4l7 2-3 5z" fill="#a06b40" />
        <path d="M0 15l24-1v10H0z" fill="#170f0e" />
        <SvgText y={23} size={10} fill="#c01f1f">C3</SvgText>
      </AppSvg>
    ),
  },
  {
    name: "CS",
    icon: (
      <AppSvg>
        <path d="M12 0l2 4 4-3v5l5-1-2 4 3 2-3 3 2 4-5-1-1 5-4-3-3 4-2-5-5 1 2-5-4-2 4-3-2-5 5 1 1-4z" fill="#d63227" />
        <path d="M5 11c1-5 8-7 13-5 2 3 0 9-5 11s-9-1-8-6z" fill="#67b32e" />
        <text x="10" y="21" fontFamily="Liberation Sans" fontWeight="bold" fontSize="9" fill="#fff">
          CS
        </text>
      </AppSvg>
    ),
  },
  {
    name: "Epic Games",
    icon: (
      <AppSvg>
        <path d="M2 2q0-2 2-2h16q2 0 2 2v17l-10 5-10-5z" fill="#0a0a0a" />
        <SvgText y={11} size={8} fill="#fff">EPIC</SvgText>
        <SvgText y={17} size={4} fill="#fff">GAMES</SvgText>
        <path d="M8 19.5h8l-4 2z" fill="#fff" />
      </AppSvg>
    ),
  },
  {
    name: "Cities Skylines",
    icon: (
      <AppSvg>
        <path d="M0 0h24v24H0z" fill="#4d9bd6" />
        <path d="M3 8h5v12H3zM9 1l5 2v18H9zM16 6h5v14h-5z" fill="#c6d3dc" />
        <path d="M11 3h3v17h-3zM19 7h2v12h-2z" fill="#74899a" />
        <SvgText y={21} size={10} fill="#fff">CS</SvgText>
      </AppSvg>
    ),
  },
  {
    name: "League of Legends",
    icon: (
      <AppSvg>
        <circle cx="13" cy="12" r="9.5" fill="#0d4756" stroke="#b98c3b" strokeWidth="1.5" />
        <path d="M3 1h7v17h9l-2 5H3l2-3V4z" fill="#d9ab4d" />
        <path d="M13 6c4 0 6 4 5 8h-4z" fill="#2395a8" />
      </AppSvg>
    ),
  },
  {
    name: "Assetto",
    icon: (
      <AppSvg>
        <path d="M0 0h19l5 5v19H5l-5-5z" fill="#151b22" />
        <path d="M3 15l5-8h8l5 8M8 7l4 8 4-8" fill="none" stroke="#8fa0a8" strokeWidth="1.5" />
      </AppSvg>
    ),
  },
  {
    name: "Throne",
    icon: (
      <AppSvg>
        <path d="M12 1v16M7 5l4 12M17 5l-4 12M3 10l7 8M21 10l-7 8" stroke="#9fb7bd" strokeWidth="1.7" />
        <path d="M2 17l5 1h10l5-1-3 6H5z" fill="#8ba3aa" />
        <circle cx="12" cy="13" r="3" fill="#c6d5d8" />
      </AppSvg>
    ),
  },
  {
    name: "FS19",
    icon: (
      <AppSvg>
        <path d="M5 1h18l-4 22H1z" fill="#f5920f" stroke="#fcd08a" />
        <SvgText y={17} size={14} fill="#fff">19</SvgText>
      </AppSvg>
    ),
  },
  {
    name: "Hitman",
    icon: (
      <AppSvg>
        <path d="M0 0h24v24H0z" fill="#c4bdb4" />
        <path d="M8 3q4-4 8 1l1 6-4 4-5-4z" fill="#7a5c4b" />
        <path d="M0 14l8-4 5 6 6-5 5 5v8H0z" fill="#1a1516" />
        <path d="M0 0l8 4-4 9-4 3zM11 14l2 8 2-8z" fill="#4a2a26" />
        <path d="M11 14l2 8 2-8z" fill="#c41d1d" />
      </AppSvg>
    ),
  },
  {
    name: "CMS 18",
    icon: (
      <AppSvg>
        <path d="M2 11l20-2v10l-8 4H3z" fill="#2b221b" stroke="#c67a22" />
        <SvgText y={8} size={9} fill="#f6d33a">CMS</SvgText>
        <SvgText y={16} size={9} fill="#e23b1e">18</SvgText>
        <path d="M5 19h13" stroke="#e88d22" strokeWidth="2" />
      </AppSvg>
    ),
  },
  {
    name: "Steam",
    icon: (
      <span className="flex size-[23px] items-center justify-center rounded-full bg-[linear-gradient(#12224a,#1a7fc0)] text-white">
        <FaSteamSymbol size={19} />
      </span>
    ),
  },
  { name: "Ayarlar", icon: <Gears />, open: true },
];

function Taskbar() {
  return (
    <footer className="flex h-10 items-stretch bg-[linear-gradient(to_right,#26272b_0%,#2a2b2e_8%,#323638_17%,#3c403f_30%,#3b4041_40%,#2c2b2e_46%,#2e2f32_51%,#3b4041_57%,#394043_64%,#2b3135_72%,#262d33_80%,#2f373e_88%,#2a3238_100%)]">
      <button className="flex w-[50px] items-center justify-center pr-0.5 text-white" aria-label="Başlat">
        <FaWindows size={17} />
      </button>
      {apps.map((app) => (
        <button
          key={app.name}
          aria-label={app.name}
          className={`flex w-[49px] items-center justify-center border-b-2 pt-0.5 ${app.open ? "border-[#b3aeb0]" : "border-transparent"}`}
        >
          {app.icon}
        </button>
      ))}
      <div className="ml-auto flex items-center text-white">
        <button className="mr-[11px]" aria-label="Gizli simgeler">
          <svg viewBox="0 0 12 12" className="size-3">
            <path d="M0 9l6-6 6 6" fill="none" stroke="currentColor" strokeWidth="1.4" />
          </svg>
        </button>
        <svg viewBox="0 0 12 18" className="mr-[10px] h-[18px] w-3">
          <rect x="3" y="1" width="6" height="11" rx="1" fill="currentColor" />
          <path d="M1 9v3q0 2 2 2h6q2 0 2-2V9M6 14v3M3 17h6" fill="none" stroke="currentColor" strokeWidth="1.2" />
        </svg>
        <svg viewBox="0 0 18 16" className="mr-[7px] h-4 w-[18px]">
          <path d="M5 3.5h11.5v8H3.5V6M10 11.5v3M6 14.5h8M.5 1.5h4v3h-4zM2.5 4.5v4" fill="none" stroke="currentColor" />
        </svg>
        <svg viewBox="0 0 18 16" className="mr-[7px] h-4 w-[18px]">
          <path d="M1 5.5h3l4-4v13l-4-4H1zM10.5 6q1.500 2 0 4" fill="none" stroke="currentColor" strokeWidth="1.2" />
          <path d="M12.5 4q3 4 0 8M14.5 2q4.500 6 0 12" fill="none" stroke="#8a8f93" />
        </svg>
        <div className="w-[58px] text-center text-[11px] leading-[18px]">
          <div>10:27</div>
          <div>15.09.2019</div>
        </div>
        <button className="relative ml-[17px] h-7 w-[26px]" aria-label="Bildirimler">
          <svg viewBox="0 0 26 28" className="h-7 w-[26px]">
            <path d="M0 5h16v12H8l-3 4v-4H0z" fill="#fff" />
            <path d="M3 8.5h10M3 11h10M3 13.5h7" stroke="#2a3238" />
            <circle cx="16" cy="19" r="8" fill="#33383c" stroke="#9a9d9f" />
            <text x="16" y="23" textAnchor="middle" fontFamily="Open Sans" fontWeight="600" fontSize="11" fill="#fff">
              4
            </text>
          </svg>
        </button>
        <span className="mr-1 ml-[9px] h-full w-px bg-[#8d9194]" />
      </div>
    </footer>
  );
}

export default function App() {
  return (
    <div className="flex min-h-screen flex-col bg-[#2d2d2f] font-['Open_Sans',sans-serif]">
      <TabStrip />
      <Toolbar />
      <BookmarkBar />
      <main className="flex flex-1 flex-col bg-[#2e2e30] bg-[radial-gradient(#262628_1px,transparent_2px)] bg-[size:4px_4px] px-[188px] pt-[30px] pb-[18px] font-['Liberation_Sans',Arial,sans-serif]">
        <div className="flex flex-1 flex-col border-4 border-[#1680c2] bg-[repeating-linear-gradient(rgba(255,255,255,0.02)_0px,rgba(255,255,255,0.02)_2px,transparent_2px,transparent_5px),linear-gradient(#183a6c_0px,#15417a_130px,#174c8c_250px,#1d5aa2_330px,#2667ae_420px,#2669b3_100%)]">
          <Header />
          <div className="flex flex-1 pl-[62px]">
            <div className="grid flex-1 grid-cols-2 items-start gap-[81px]">
              <DeviceInfo />
              <div className="flex flex-col gap-[15px]">
                <SystemStatus />
                <InterfaceStatus />
                <DslStats />
              </div>
            </div>
            <aside className="flex w-[171px] flex-col items-end gap-[14px] pt-[137px] pr-[5px]">
              <SideLink label="Ağ Haritası" path="M24 5v7l-6 6 6 6v7L11 18z" />
              <SideLink label="Sanal Cihaz" path="M15 5v7l4 6-4 6v7l12-13z" />
            </aside>
          </div>
          <BottomNav />
        </div>
      </main>
      <Taskbar />
    </div>
  );
}
